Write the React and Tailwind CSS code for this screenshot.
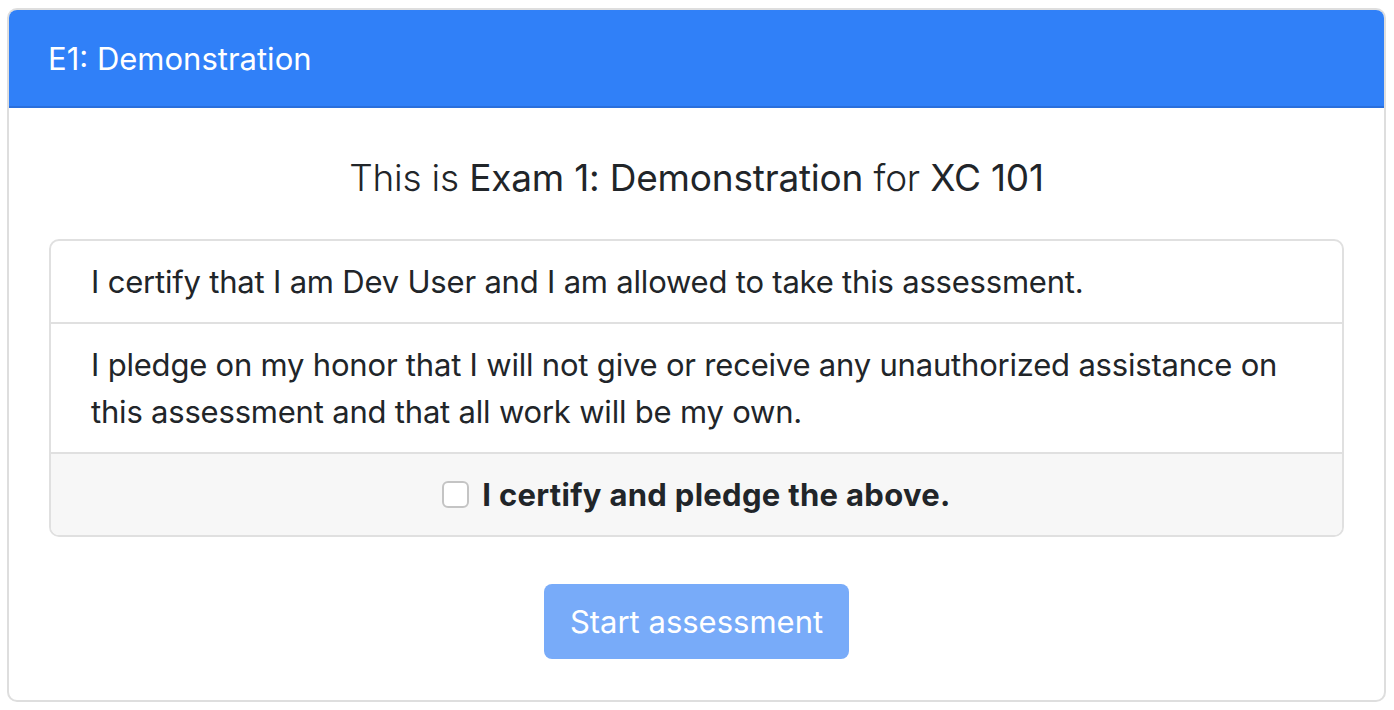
import React, { useState } from 'react';

const font = { fontFamily: 'Inter, "Noto Sans", sans-serif' };

export default function App() {
  const [checked, setChecked] = useState(false);

  return (
    <div className="bg-white min-h-[710px] pl-[7px] pr-[8px] pt-[8px]" style={font}>
      <div className="border-2 border-[#dedede] rounded-[10px] overflow-hidden">
        {/* Header */}
        <div className="bg-[#3080f8] border-b-2 border-[#2a6fdc] h-[98px] flex items-center px-[40px]">
          <h1 className="text-white text-[31px] leading-none font-normal -ml-px">E1: Demonstration</h1>
        </div>

        {/* Body */}
        <div className="px-[40px] pt-[46px] pb-[41px] text-[#212529]">
          <p className="text-center text-[37px] leading-[48px] font-light tracking-[-0.2px]">
            This is <span className="font-normal">Exam 1: Demonstration</span> for <span className="font-normal">XC 101</span>
          </p>

          <div className="mt-[37px] border-2 border-[#e0e0e0] rounded-[10px] overflow-hidden text-[31px] leading-[47px] tracking-[-0.2px]">
            <div className="px-[40px] py-[17px] border-b-2 border-[#e0e0e0]">
              I certify that I am Dev User and I am allowed to take this assessment.
            </div>
            <div className="px-[40px] py-[17px] border-b-2 border-[#e0e0e0]">
              I pledge on my honor that I will not give or receive any unauthorized assistance on this assessment and that all work will be my own.
            </div>
            <label className="bg-[#f7f7f7] py-[17px] flex items-center justify-center gap-[13px] cursor-pointer">
              <input
                type="checkbox"
                checked={checked}
                onChange={(e) => setChecked(e.target.checked)}
                className="appearance-none w-[27px] h-[27px] rounded-[6px] border-2 border-[#c4c4c4] bg-white checked:bg-[#3080f8] checked:border-[#3080f8]"
              />
              <span className="font-bold tracking-[0.3px]">I certify and pledge the above.</span>
            </label>
          </div>

          <div className="flex justify-center mt-[47px]">
            <button
              disabled={!checked}
              className="bg-[#3080f8] disabled:bg-[#78abf9] text-white text-[31px] leading-[47px] px-[26px] py-[14px] rounded-[8px]"
            >
              Start assessment
            </button>
          </div>
        </div>
      </div>
    </div>
  );
}
